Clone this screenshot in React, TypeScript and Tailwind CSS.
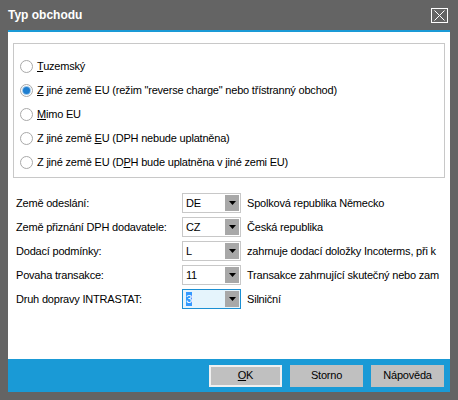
import React, { useState } from 'react';

type Option = { id: string; label: React.ReactNode };

const options: Option[] = [
  { id: 'tuz', label: <><u>T</u>uzemský</> },
  { id: 'eu-rc', label: <><u>Z</u> jiné země EU (režim "reverse charge" nebo třístranný obchod)</> },
  { id: 'mimo', label: <><u>M</u>imo EU</> },
  { id: 'eu-no', label: <>Z jiné země <u>E</u>U (DPH nebude uplatněna)</> },
  { id: 'eu-yes', label: <>Z jiné země EU (D<u>P</u>H bude uplatněna v jiné zemi EU)</> },
];

const fields = [
  { label: 'Země odeslání:', code: 'DE', text: 'Spolková republika Německo' },
  { label: 'Země přiznání DPH dodavatele:', code: 'CZ', text: 'Česká republika' },
  { label: 'Dodací podmínky:', code: 'L', text: 'zahrnuje dodací doložky Incoterms, při k' },
  { label: 'Povaha transakce:', code: '11', text: 'Transakce zahrnující skutečný nebo zam' },
  { label: 'Druh dopravy INTRASTAT:', code: '3', text: 'Silniční', focused: true },
];

const Radio: React.FC<{ checked: boolean }> = ({ checked }) => (
  <span className="w-[13px] h-[13px] rounded-full border border-[#a9a9a9] bg-white flex items-center justify-center shrink-0">
    {checked && <span className="w-[7px] h-[7px] rounded-full bg-[#1e7ed0] ring-1 ring-[#9cc7ea]" />}
  </span>
);

const Combo: React.FC<{ code: string; focused?: boolean }> = ({ code, focused }) => (
  <div
    className={
      focused
        ? 'w-[59px] h-[20px] border border-[#1b8fd2] bg-[#e5f4fc] flex items-stretch p-[1px] shrink-0'
        : 'w-[59px] h-[20px] border border-[#c8c8c8] bg-white flex items-stretch p-[1px] shrink-0'
    }
  >
    <div className="flex-1 flex items-center pl-[2px]">
      {focused ? <span className="bg-[#3399ff] text-white leading-[14px]">{code}</span> : <span>{code}</span>}
    </div>
    <div className="w-[14px] bg-[#a8a8a8] flex items-center justify-center">
      <svg width="7" height="4" viewBox="0 0 7 4">
        <path d="M0 0h7L3.5 4z" fill="#000" />
      </svg>
    </div>
  </div>
);

export default function App() {
  const [picked, setPicked] = useState('eu-rc');

  return (
    <div className="w-[458px] h-[400px] bg-[#646464] flex flex-col text-[11px] tracking-[-0.2px] text-black" style={{ fontFamily: '"Liberation Sans", Arial, sans-serif' }}>
      {/* title bar */}
      <div className="h-[30px] flex items-center justify-between pl-2 pr-[10px]">
        <span className="text-white font-bold text-[12px] tracking-normal">Typ obchodu</span>
        <button className="w-[17px] h-[15px] border border-white flex items-center justify-center">
          <svg width="11" height="11" viewBox="0 0 11 11">
            <path d="M0.5 0.5l10 10M10.5 0.5l-10 10" stroke="#fff" strokeWidth="1" />
          </svg>
        </button>
      </div>

      <div className="mx-2 flex-1 flex flex-col border-t-2 border-[#1a9ad6]">
        <div className="bg-white h-[327px] flex flex-col">
          {/* trade type */}
          <div className="mt-[11px] mx-[5px] h-[135px] border border-[#c8c8c8] pt-[10px] pl-[6px] flex flex-col">
            {options.map(o => (
              <label key={o.id} className="h-[24px] flex items-center gap-[4px] cursor-default" onClick={() => setPicked(o.id)}>
                <Radio checked={picked === o.id} />
                <span className="whitespace-nowrap">{o.label}</span>
              </label>
            ))}
          </div>

          {/* detail fields */}
          <div className="mt-[15px] pl-2 pr-2 flex flex-col gap-[4px]">
            {fields.map(f => (
              <div key={f.label} className="h-[20px] flex items-center">
                <span className="w-[166px] shrink-0">{f.label}</span>
                <Combo code={f.code} focused={f.focused} />
                <span className="ml-[6px] flex-1 whitespace-nowrap">{f.text}</span>
              </div>
            ))}
          </div>
        </div>

        {/* buttons */}
        <div className="h-[33px] bg-[#1a9ad6] flex items-center justify-end gap-2 pr-[6px]">
          <button className="w-[73px] h-[22px] bg-[#c0c0c0] border-2 border-[#f0f0f0]">
            <u>O</u>K
          </button>
          <button className="w-[73px] h-[22px] bg-[#c0c0c0]">Storno</button>
          <button className="w-[73px] h-[22px] bg-[#c0c0c0]">Nápověda</button>
        </div>
      </div>
      <div className="h-[8px]" />
    </div>
  );
}
